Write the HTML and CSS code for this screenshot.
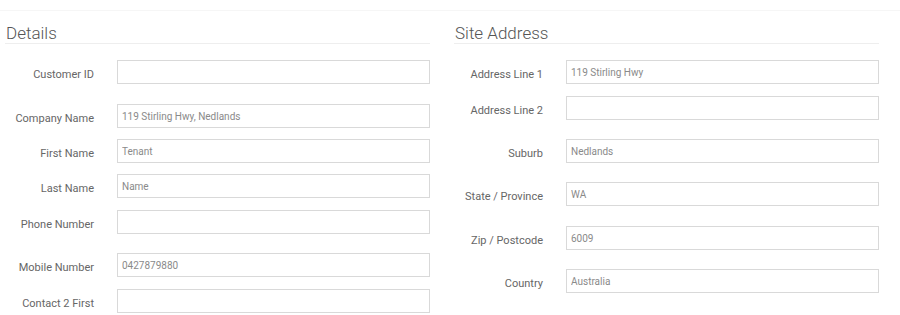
FILE: index.html
```html
<!DOCTYPE html>
<html>
<head>
<meta charset="utf-8">
<link rel="stylesheet" href="styles.css">
</head>
<body>
<div class="topbar"></div>
<div class="columns">
  <section class="col">
    <h2 class="heading">Details</h2>
    <div class="row first"><label>Customer ID</label><input type="text" value=""></div>
    <div class="row gap-xl"><label>Company Name</label><input type="text" value="119 Stirling Hwy, Nedlands"></div>
    <div class="row gap-s"><label>First Name</label><input type="text" value="Tenant"></div>
    <div class="row gap-s"><label>Last Name</label><input type="text" value="Name"></div>
    <div class="row gap-m"><label>Phone Number</label><input type="text" value=""></div>
    <div class="row gap-l"><label>Mobile Number</label><input type="text" value="0427879880"></div>
    <div class="row gap-m"><label>Contact 2 First</label><input type="text" value=""></div>
  </section>
  <section class="col">
    <h2 class="heading">Site Address</h2>
    <div class="row first"><label>Address Line 1</label><input type="text" value="119 Stirling Hwy"></div>
    <div class="row gap-m"><label>Address Line 2</label><input type="text" value=""></div>
    <div class="row gap-l"><label>Suburb</label><input type="text" value="Nedlands"></div>
    <div class="row gap-l"><label>State / Province</label><input type="text" value="WA"></div>
    <div class="row gap-xl"><label>Zip / Postcode</label><input type="text" value="6009"></div>
    <div class="row gap-l"><label>Country</label><input type="text" value="Australia"></div>
  </section>
</div>
</body>
</html>
```
FILE: styles.css
```css
html, body {
  margin: 0;
  padding: 0;
  background: #fff;
  font-family: Roboto, "Liberation Sans", sans-serif;
  overflow: hidden;
}
.topbar {
  height: 10px;
  border-bottom: 1px solid #f6f6f6;
}
.columns {
  display: flex;
  gap: 24px;
  padding-left: 5px;
}
.col {
  width: 425px;
}
.heading {
  margin: 0;
  padding-top: 12px;
  font-size: 17px;
  line-height: 20px;
  font-weight: 300;
  color: #555;
  border-bottom: 1px solid #eeeeee;
  padding-left: 1px;
}
.row {
  display: flex;
  align-items: flex-start;
  gap: 23px;
}
.row label {
  width: 89px;
  flex: none;
  text-align: right;
  font-size: 11px;
  line-height: 16px;
  padding-top: 7px;
  color: #666;
}
.row input {
  box-sizing: border-box;
  width: 313px;
  height: 24px;
  margin: 0;
  border: 1px solid #d9d9d9;
  padding: 0 4px;
  font-family: Roboto, "Liberation Sans", sans-serif;
  font-size: 10px;
  color: #8a8a8a;
  outline: none;
  background: #fff;
}
.row.first { margin-top: 16px; }
.row.gap-s { margin-top: 11px; }
.row.gap-m { margin-top: 12px; }
.row.gap-l { margin-top: 19px; }
.row.gap-xl { margin-top: 20px; }
```
